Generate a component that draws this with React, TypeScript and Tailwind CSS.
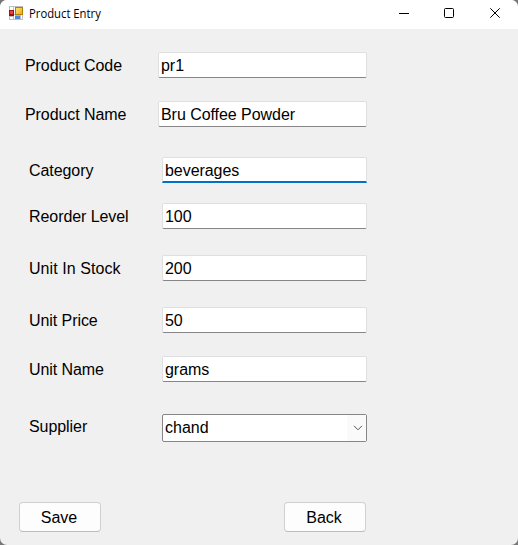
import { useState } from "react";

type Field = {
  label: string;
  value: string;
  row: string;
  tracking: string;
  focused?: boolean;
};

const fields: Field[] = [
  { label: "Product Code", value: "pr1", row: "mt-[23px] pl-[25px]", tracking: "tracking-[-0.07px]" },
  { label: "Product Name", value: "Bru Coffee Powder", row: "mt-[23px] pl-[25px]", tracking: "tracking-[-0.07px]" },
  { label: "Category", value: "beverages", row: "mt-[30px] pl-[29px]", tracking: "tracking-[-0.07px]", focused: true },
  { label: "Reorder Level", value: "100", row: "mt-5 pl-[29px]", tracking: "tracking-[-0.07px]" },
  { label: "Unit In Stock", value: "200", row: "mt-[26px] pl-[29px]", tracking: "tracking-[0.07px]" },
  { label: "Unit Price", value: "50", row: "mt-[26px] pl-[29px]", tracking: "tracking-[-0.07px]" },
  { label: "Unit Name", value: "grams", row: "mt-[23px] pl-[29px]", tracking: "tracking-[-0.07px]" },
];

function FormIcon() {
  return (
    <svg width="14" height="14" viewBox="0 0 14 14" shapeRendering="crispEdges">
      <defs>
        <linearGradient id="gold" x1="0" y1="0" x2="1" y2="1">
          <stop offset="0" stopColor="#ffe98a" />
          <stop offset="1" stopColor="#f0ae00" />
        </linearGradient>
      </defs>
      <path d="M0.5 0.5H13.5V13.5H0.5ZM0.5 4.5H5M0.5 10.5H5M4.5 0V14M4.5 8.5H13.5M11.5 8V14" fill="#fff" stroke="#bfbfbf" />
      <rect x="0" y="4" width="5" height="6" fill="#a50d0d" />
      <rect x="1" y="5" width="3" height="3" fill="#dc4a3c" />
      <rect x="6" y="1" width="7" height="7" fill="url(#gold)" stroke="#b27c08" />
      <rect x="6" y="9" width="5" height="4" fill="#4a88ea" />
      <rect x="6" y="9" width="5" height="1" fill="#8fb9f8" />
    </svg>
  );
}

function TitleBar() {
  return (
    <header className="flex h-[29px] items-start bg-white">
      <div className="mt-[6px] ml-[9px]">
        <FormIcon />
      </div>
      <h1 className="mt-[5px] ml-[6px] h-[18px] origin-left scale-x-[0.94] font-['Open_Sans','Noto_Sans',sans-serif] text-[12px] leading-[18px] whitespace-nowrap">
        Product Entry
      </h1>
      <div className="ml-auto flex h-[26px]">
        <button aria-label="Minimize" className="flex w-[45px] items-center justify-center">
          <svg width="10" height="10" viewBox="0 0 10 10">
            <path d="M0 5.5H10" stroke="#000" />
          </svg>
        </button>
        <button aria-label="Maximize" className="flex w-[46px] items-center justify-center">
          <svg width="10" height="10" viewBox="0 0 10 10">
            <rect x="0.5" y="0.5" width="9" height="9" rx="1" fill="none" stroke="#000" />
          </svg>
        </button>
        <button aria-label="Close" className="flex w-[46px] items-center justify-center">
          <svg width="10" height="10" viewBox="0 0 10 10">
            <path d="M0.3 0.3L9.7 9.7M9.7 0.3L0.3 9.7" stroke="#000" />
          </svg>
        </button>
      </div>
    </header>
  );
}

function FieldRow({ field }: { field: Field }) {
  const [value, setValue] = useState(field.value);
  const edge = field.focused
    ? "rounded-t-[2px] border-b-2 border-b-[#0070c8] pt-[2px]"
    : "rounded-[2px] border-b-[#868686] pt-px";
  return (
    <label className={`flex h-[26px] items-center pr-[151px] ${field.row}`}>
      <span className={`w-[133px] shrink-0 pt-px leading-[26px] ${field.tracking}`}>{field.label}</span>
      <input
        value={value}
        onChange={(e) => setValue(e.target.value)}
        className={`h-[26px] min-w-0 flex-1 border border-[#dfdfdf] bg-white px-[2px] tracking-[-0.05px] outline-none ${edge}`}
      />
    </label>
  );
}

export default function App() {
  return (
    <div className="h-[545px] w-[518px] overflow-hidden bg-[#777]">
      <main className="flex h-full flex-col overflow-hidden rounded-[7px] bg-[#f0f0f0] font-['Liberation_Sans',Arial,sans-serif] text-[16px] text-black">
        <TitleBar />
        {fields.map((f) => (
          <FieldRow key={f.label} field={f} />
        ))}
        <div className="mt-8 flex h-7 pl-[29px]">
          <span className="w-[133px] leading-[25px] tracking-[-0.07px]">Supplier</span>
          <div className="flex w-[205px] items-center justify-between rounded-[2px] border border-[#868686] bg-white pl-[2px]">
            <span className="leading-[26px]">chand</span>
            <span className="flex h-full w-[19px] items-center justify-center bg-[#fafafa]">
              <svg width="10" height="6" viewBox="0 0 10 6" className="ml-[2px]">
                <path d="M1 0.8L5 4.8L9 0.8" fill="none" stroke="#555" />
              </svg>
            </span>
          </div>
        </div>
        <div className="mt-[60px] flex gap-[183px] pl-[19px]">
          <button className="h-[30px] w-[82px] rounded-[4px] border border-[#d0d0d0] border-b-[#bcbcbc] bg-[#fdfdfd] pt-px pr-[2px]">Save</button>
          <button className="h-[30px] w-[82px] rounded-[4px] border border-[#d0d0d0] border-b-[#bcbcbc] bg-[#fdfdfd] pt-px pr-[2px]">Back</button>
        </div>
      </main>
    </div>
  );
}
